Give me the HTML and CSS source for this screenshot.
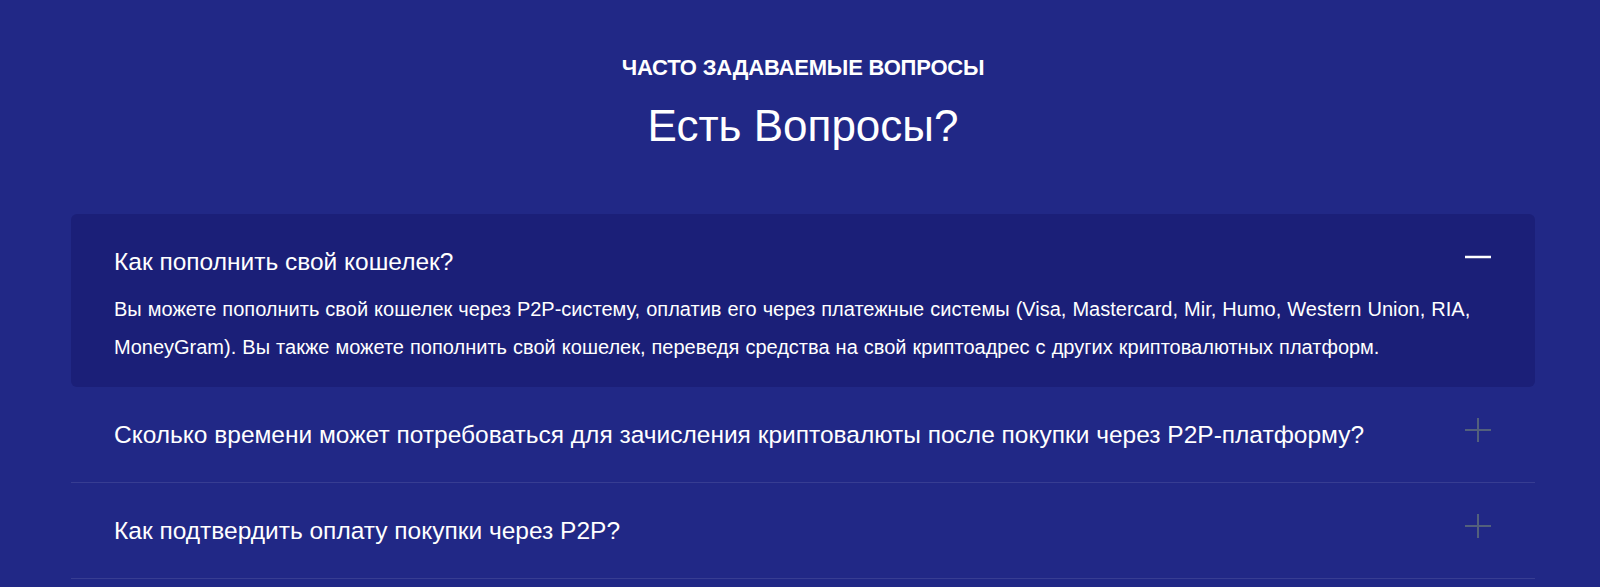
FILE: index.html
```html
<!DOCTYPE html>
<html lang="ru">
<head>
  <meta charset="UTF-8">
  <meta name="viewport" content="width=device-width, initial-scale=1.0">
  <title>Часто задаваемые вопросы</title>
  <link rel="stylesheet" href="styles.css">
</head>
<body>
  <section class="faq">
    <div class="faq-header">
      <h3 class="faq-subtitle">Часто задаваемые вопросы</h3>
      <h2 class="faq-title">Есть Вопросы?</h2>
    </div>

    <div class="faq-list">
      <div class="faq-item open">
        <div class="faq-question">
          <span>Как пополнить свой кошелек?</span>
          <svg class="faq-icon" viewBox="0 0 26 26"><path class="icon-v" d="M13 1v24"/><path d="M0 13h26"/></svg>
        </div>
        <div class="faq-answer">
          Вы можете пополнить свой кошелек через P2P-систему, оплатив его через платежные системы (Visa, Mastercard, Mir, Humo, Western Union, RIA, MoneyGram). Вы также можете пополнить свой кошелек, переведя средства на свой криптоадрес с других криптовалютных платформ.
        </div>
      </div>

      <div class="faq-item">
        <div class="faq-question">
          <span>Сколько времени может потребоваться для зачисления криптовалюты после покупки через P2P-платформу?</span>
          <svg class="faq-icon" viewBox="0 0 26 26"><path class="icon-v" d="M13 1v24"/><path d="M0 13h26"/></svg>
        </div>
      </div>

      <div class="faq-item">
        <div class="faq-question">
          <span>Как подтвердить оплату покупки через P2P?</span>
          <svg class="faq-icon" viewBox="0 0 26 26"><path class="icon-v" d="M13 1v24"/><path d="M0 13h26"/></svg>
        </div>
      </div>
    </div>
  </section>

  <script>
    // Toggle items of the accordion
    document.querySelectorAll('.faq-question').forEach(function(q) {
      q.addEventListener('click', function() {
        q.parentElement.classList.toggle('open');
      });
    });
  </script>
</body>
</html>
```

FILE: styles.css
```css
body {
  margin: 0;
  background: #212886;
  color: #fff;
  font-family: "Liberation Sans", Arial, sans-serif;
}
.faq {
  padding: 55px 65px 0 71px;
}
.faq-header {
  text-align: center;
  margin-bottom: 63px;
}
.faq-subtitle {
  margin: 0 0 21px;
  font-size: 22px;
  line-height: 25px;
  font-weight: bold;
  letter-spacing: -0.2px;
  text-transform: uppercase;
}
.faq-title {
  margin: 0;
  font-size: 44px;
  line-height: 50px;
  font-weight: normal;
}
.faq-item {
  padding: 32px 44px 31px 43px;
  border-bottom: 1px solid rgba(255,255,255,0.1);
}
.faq-item.open {
  background: #1b1f78;
  border-radius: 6px;
  border-bottom: none;
  padding-bottom: 21px;
}
.faq-question {
  display: flex;
  justify-content: space-between;
  align-items: flex-start;
  gap: 24px;
  font-size: 24.5px;
  line-height: 32px;
  cursor: pointer;
}
.faq-icon {
  flex: none;
  width: 26px;
  height: 26px;
  margin-top: -2px;
  stroke: #53607c;
  stroke-width: 2;
}
.open .faq-icon {
  stroke: #fff;
  stroke-width: 2.5;
}
.open .icon-v {
  display: none;
}
.faq-answer {
  margin-top: 12px;
  font-size: 20px;
  line-height: 38px;
  word-spacing: 0.5px;
}
```
